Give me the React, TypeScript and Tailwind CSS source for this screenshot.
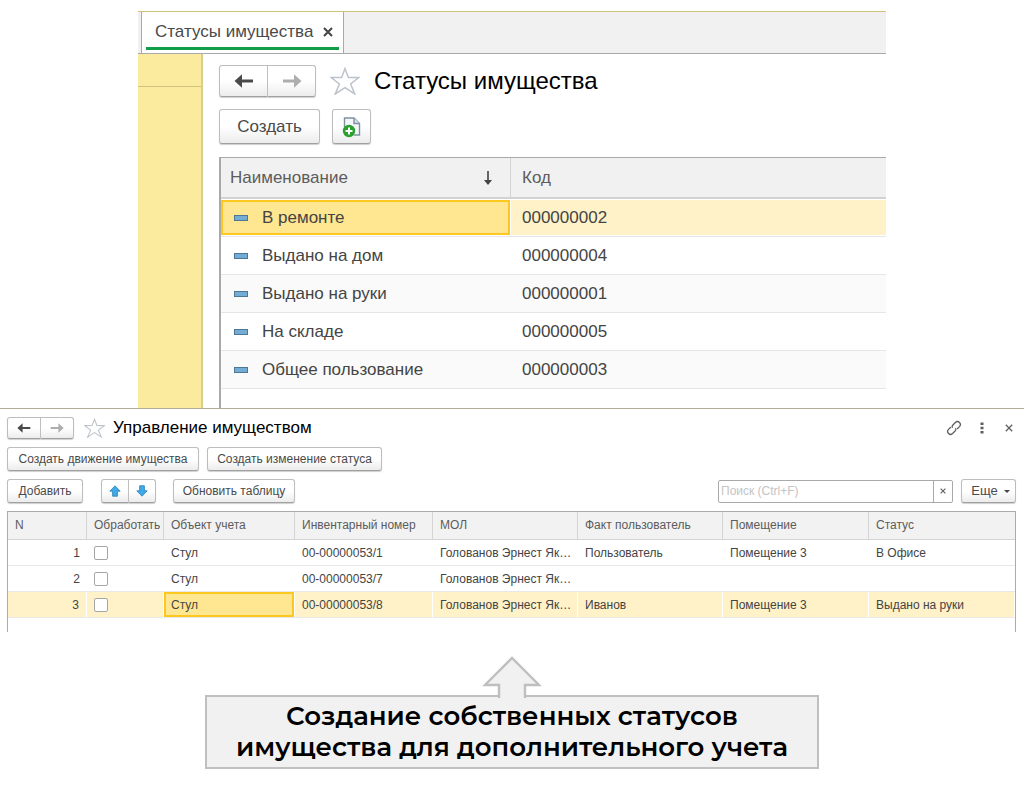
import type { ReactNode } from "react";
import clsx from "clsx";

const statuses = [
    { name: "В ремонте", code: "000000002" },
    { name: "Выдано на дом", code: "000000004" },
    { name: "Выдано на руки", code: "000000001" },
    { name: "На складе", code: "000000005" },
    { name: "Общее пользование", code: "000000003" },
];

const assets = [
    { n: 1, object: "Стул", inventory: "00-00000053/1", owner: "Голованов Эрнест Як…", user: "Пользователь", room: "Помещение 3", status: "В Офисе" },
    { n: 2, object: "Стул", inventory: "00-00000053/7", owner: "Голованов Эрнест Як…", user: "", room: "", status: "" },
    { n: 3, object: "Стул", inventory: "00-00000053/8", owner: "Голованов Эрнест Як…", user: "Иванов", room: "Помещение 3", status: "Выдано на руки" },
];

const assetColumns = ["N", "Обработать", "Объект учета", "Инвентарный номер", "МОЛ", "Факт пользователь", "Помещение", "Статус"];

const SELECTED_STATUS = 0;
const SELECTED_ASSET = 3;

type ButtonProps = {
    children: ReactNode;
    className?: string;
    label?: string;
};

function Button({ children, className, label }: ButtonProps) {
    return (
        <button
            type="button"
            aria-label={label}
            className={clsx(
                "flex shrink-0 items-center justify-center whitespace-nowrap rounded-[3px] border border-[#bdbdbd] border-b-[#a0a0a0] bg-linear-to-b from-white from-50% to-[#ececec] text-[#4a4a4a] shadow-[0_1px_1px_#cfcfcf]",
                className
            )}
        >
            {children}
        </button>
    );
}

function Arrow({ className }: { className?: string }) {
    return (
        <svg viewBox="0 0 20 14" className={className} aria-hidden="true">
            <path d="M0.5 7 8 0.3V5.4H19V8.6H8V13.7Z" fill="currentColor" />
        </svg>
    );
}

function Star({ className }: { className?: string }) {
    return (
        <svg viewBox="0 0 30 28" className={className} fill="none" stroke="#bcc3ca" strokeWidth="1.5" aria-hidden="true">
            <path d="M15 1.5 18.4 10.4 28.8 10.6 20.6 17 24.8 27 15 20.6 5.2 27 9.4 17 1.2 10.6 11.6 10.4Z" />
        </svg>
    );
}

function Cross({ className }: { className?: string }) {
    return (
        <svg viewBox="0 0 10 10" className={className} fill="none" stroke="currentColor" aria-hidden="true">
            <path d="M1 1 9 9M9 1 1 9" />
        </svg>
    );
}

function BlueArrow({ className }: { className?: string }) {
    return (
        <svg viewBox="0 0 12 12" className={clsx("h-3 w-3", className)} aria-hidden="true">
            <path d="M6 0.8 11.2 6.2H8.4V11.2H3.6V6.2H0.8Z" fill="#3fa9ea" stroke="#2b7fb5" strokeWidth="0.8" />
        </svg>
    );
}

function StatusesWindow() {
    return (
        <section className="mx-auto w-full max-w-[748px] border-t border-[#cdc27a]">
            <div className="flex h-[42px] border-b border-[#a9a9a9] bg-[#f1f1f1] pl-[3px]">
                <div className="flex flex-col border-x border-[#a9a9a9] bg-white px-1">
                    <div className="flex flex-1 items-center gap-2.5 pt-1 pr-1.5 pl-[9px]">
                        <span className="text-[17px] leading-none text-[#4a4a4a]">Статусы имущества</span>
                        <button type="button" aria-label="Закрыть вкладку" className="text-[#444]">
                            <Cross className="h-2.5 w-2.5 stroke-2" />
                        </button>
                    </div>
                    <div className="mb-[3px] h-[3px] bg-[#0f9d49]" />
                </div>
            </div>

            <div className="flex">
                <aside className="w-[65px] shrink-0 border-r-2 border-[#d9cf8c] bg-[#fbeb9e]">
                    <div className="h-[33px] border-b border-[#cfc27c]" />
                </aside>

                <div className="min-w-0 flex-1 pt-[11px] pl-4">
                    <div className="flex items-center">
                        <div className="flex">
                            <Button label="Назад" className="h-8 w-[49px] rounded-r-none">
                                <Arrow className="h-3.5 w-5" />
                            </Button>
                            <Button label="Вперед" className="h-8 w-12 rounded-l-none border-l-0">
                                <Arrow className="h-3.5 w-5 rotate-180 text-[#adadad]" />
                            </Button>
                        </div>
                        <Star className="ml-3.5 h-7 w-[30px]" />
                        <h1 className="ml-3.5 text-2xl leading-8 text-black">Статусы имущества</h1>
                    </div>

                    <div className="mt-3 flex gap-3">
                        <Button className="h-[35px] w-[101px] text-[17px]">Создать</Button>
                        <Button label="Создать копированием" className="h-[35px] w-[39px]">
                            <svg viewBox="0 0 20 22" className="h-[22px] w-5" fill="none" aria-hidden="true">
                                <path d="M2.5 11V2H12L17.5 7.5V19H12" fill="#f5f8fa" stroke="#7f90a3" strokeWidth="1.4" />
                                <path d="M12 2V7.5H17.5" fill="#dde4ea" stroke="#7f90a3" strokeWidth="1.4" />
                                <circle cx="7" cy="15" r="6.2" fill="#2ba12f" />
                                <path d="M7 11.5V18.5M3.5 15H10.5" stroke="#fff" strokeWidth="2" />
                            </svg>
                        </Button>
                    </div>

                    <div className="mt-[13px] border-t border-l-2 border-[#a9a9a9] pb-[19px]">
                        <table className="w-full table-fixed border-separate border-spacing-0 text-left text-[17px] leading-6 text-[#444]">
                            <colgroup>
                                <col className="w-[290px]" />
                                <col />
                            </colgroup>
                            <thead>
                                <tr className="h-[41px] bg-[#f1f1f1] text-[#5c5c5c]">
                                    <th className="border-r border-b-2 border-[#d2d2d2] px-[9px] font-normal">
                                        <span className="flex items-center justify-between pr-2">
                                            Наименование
                                            <svg viewBox="0 0 10 16" className="h-4 w-2.5" aria-hidden="true">
                                                <path d="M4.2 1H5.8V10H9L5 15 1 10H4.2Z" fill="#444" />
                                            </svg>
                                        </span>
                                    </th>
                                    <th className="border-b-2 border-[#d2d2d2] px-[11px] font-normal">Код</th>
                                </tr>
                            </thead>
                            <tbody>
                                {statuses.map((item, index) => {
                                    const selected = index === SELECTED_STATUS;
                                    return (
                                        <tr key={item.code} className={clsx("h-[38px]", index > 0 && index % 2 === 0 && "bg-[#fafafa]")}>
                                            <td className="border-b border-[#e6e6e6] p-0">
                                                <div className={clsx("flex h-[35px] items-center border-2 pl-[11px]", selected ? "mr-px border-[#fcc81f] bg-[#ffe690]" : "border-transparent")}>
                                                    <span className="mr-3.5 h-1.5 w-3.5 border border-[#4a7896] bg-[#74acd3]" />
                                                    {item.name}
                                                </div>
                                            </td>
                                            <td className="border-b border-[#e6e6e6] p-0">
                                                <div className={clsx("flex h-[35px] items-center pl-[11px]", selected && "bg-[#fff2c9]")}>{item.code}</div>
                                            </td>
                                        </tr>
                                    );
                                })}
                            </tbody>
                        </table>
                    </div>
                </div>
            </div>
        </section>
    );
}

function AssetsTable() {
    return (
        <div className="mt-2 border-x border-t border-[#ababab] pb-3.5">
            <table className="w-full table-fixed border-separate border-spacing-0 text-left text-xs leading-4 text-[#444]">
                <colgroup>
                    <col className="w-[79px]" />
                    <col className="w-[77px]" />
                    <col className="w-[131px]" />
                    <col className="w-[138px]" />
                    <col className="w-[145px]" />
                    <col className="w-[145px]" />
                    <col className="w-[146px]" />
                    <col />
                </colgroup>
                <thead>
                    <tr className="h-7 bg-[#f2f2f2] text-[#5c5c5c]">
                        {assetColumns.map((title) => (
                            <th key={title} className="border-r border-b border-[#d4d4d4] px-[7px] pt-0 pb-0.5 font-normal whitespace-nowrap last:border-r-0">
                                {title}
                            </th>
                        ))}
                    </tr>
                </thead>
                <tbody>
                    {assets.map((row) => {
                        const selected = row.n === SELECTED_ASSET;
                        const cell = clsx(
                            "border-b border-[#e8e8e8] px-[7px] py-0 whitespace-nowrap",
                            selected && "border-r border-r-white bg-[#fff2c9]"
                        );
                        return (
                            <tr key={row.n} className="h-[26px]">
                                <td className={clsx(cell, "text-right")}>{row.n}</td>
                                <td className={cell}>
                                    <input
                                        type="checkbox"
                                        aria-label={`Обработать строку ${row.n}`}
                                        className="block h-3.5 w-3.5 appearance-none rounded-[2px] border border-[#a6a6a6] bg-white"
                                    />
                                </td>
                                {selected ? (
                                    <td className="border-b border-[#e8e8e8] p-0">
                                        <div className="mr-px flex h-[25px] items-center border-2 border-[#fcc81f] bg-[#ffe690] pl-[5px]">{row.object}</div>
                                    </td>
                                ) : (
                                    <td className={cell}>{row.object}</td>
                                )}
                                <td className={cell}>{row.inventory}</td>
                                <td className={cell}>{row.owner}</td>
                                <td className={cell}>{row.user}</td>
                                <td className={cell}>{row.room}</td>
                                <td className={cell}>{row.status}</td>
                            </tr>
                        );
                    })}
                </tbody>
            </table>
        </div>
    );
}

function AssetsWindow() {
    return (
        <section className="border-t border-[#b3ad98] px-2 pt-[7px] pl-[7px]">
            <div className="flex items-center">
                <div className="flex">
                    <Button label="Назад" className="h-[22px] w-[34px] rounded-r-none">
                        <Arrow className="h-2.5 w-3.5" />
                    </Button>
                    <Button label="Вперед" className="h-[22px] w-[33px] rounded-l-none border-l-0">
                        <Arrow className="h-2.5 w-3.5 rotate-180 text-[#adadad]" />
                    </Button>
                </div>
                <Star className="ml-2.5 h-5 w-[21px]" />
                <h2 className="ml-2 text-[17px] leading-6 text-black">Управление имуществом</h2>

                <div className="ml-auto flex items-center gap-3 pr-[3px] text-[#5f5f5f]">
                    <button type="button" aria-label="Ссылка">
                        <svg viewBox="0 0 16 16" className="h-4 w-4" fill="none" stroke="currentColor" strokeWidth="1.3" strokeLinecap="round" aria-hidden="true">
                            <path d="M6.2 7.4C5.9 6.5 6.2 5.7 6.9 5L9.4 2.5a2.9 2.9 0 0 1 4.1 4.1L11.6 8.5" />
                            <path d="M9.8 8.6C10.1 9.5 9.8 10.3 9.1 11L6.6 13.5a2.9 2.9 0 0 1-4.1-4.1L4.4 7.5" />
                        </svg>
                    </button>
                    <button type="button" aria-label="Меню" className="w-[15px]">
                        <svg viewBox="0 0 4 12" className="mx-auto h-3 w-1" fill="currentColor" aria-hidden="true">
                            <path d="M0.5 0.5h3v2.6h-3zM0.5 4.7h3v2.6h-3zM0.5 8.9h3v2.6h-3z" />
                        </svg>
                    </button>
                    <button type="button" aria-label="Закрыть" className="pl-1">
                        <Cross className="h-2 w-2 stroke-[1.6]" />
                    </button>
                </div>
            </div>

            <div className="mt-[7px] flex gap-2 text-xs">
                <Button className="h-6 w-[192px]">Создать движение имущества</Button>
                <Button className="h-6 w-[175px]">Создать изменение статуса</Button>
            </div>

            <div className="mt-2 flex items-center text-xs">
                <Button className="h-6 w-[76px]">Добавить</Button>
                <div className="ml-[18px] flex">
                    <Button label="Переместить вверх" className="h-6 w-7 rounded-r-none">
                        <BlueArrow />
                    </Button>
                    <Button label="Переместить вниз" className="h-6 w-[27px] rounded-l-none border-l-0">
                        <BlueArrow className="rotate-180" />
                    </Button>
                </div>
                <Button className="ml-[17px] h-6 w-[122px]">Обновить таблицу</Button>

                <div className="ml-auto flex h-[23px] w-[235px] rounded-[2px] border border-[#a9a9a9] bg-white">
                    <input
                        type="text"
                        aria-label="Поиск"
                        placeholder="Поиск (Ctrl+F)"
                        className="min-w-0 flex-1 px-0.5 outline-none placeholder:text-[#c4c4c4]"
                    />
                    <button type="button" aria-label="Очистить поиск" className="flex w-[19px] items-center justify-center border-l border-[#a9a9a9] text-[#666]">
                        <Cross className="h-1.5 w-1.5 stroke-2" />
                    </button>
                </div>
                <Button className="ml-2 h-6 w-[55px] gap-1.5 pl-1">
                    <span className="text-[13px]">Еще</span>
                    <svg viewBox="0 0 6 3" className="h-[3px] w-1.5" aria-hidden="true">
                        <path d="M0 0H6L3 3Z" fill="#444" />
                    </svg>
                </Button>
            </div>

            <AssetsTable />
        </section>
    );
}

function Callout() {
    return (
        <div className="mx-auto mt-6 mb-8 flex max-w-[614px] flex-col items-center">
            {/* the arrow's stem covers the top border of the box */}
            <svg viewBox="0 0 60 42" className="relative -mb-[3px] h-[42px] w-[60px]" aria-hidden="true">
                <path d="M17 42V29H3L30 2 57 29H43V42" fill="#f1f1f1" stroke="#bfbfbf" strokeWidth="2.4" />
            </svg>
            <p className="w-full border-2 border-[#c0c0c0] bg-[#f1f1f1] py-1 text-center font-['Montserrat','Inter',sans-serif] text-[26px] leading-[31px] font-semibold text-black">
                Создание собственных статусов
                <br />
                имущества для дополнительного учета
            </p>
        </div>
    );
}

export default function App() {
    return (
        <main className="min-h-screen bg-white pt-[11px] font-['Liberation_Sans',Arial,sans-serif]">
            <StatusesWindow />
            <AssetsWindow />
            <Callout />
        </main>
    );
}
